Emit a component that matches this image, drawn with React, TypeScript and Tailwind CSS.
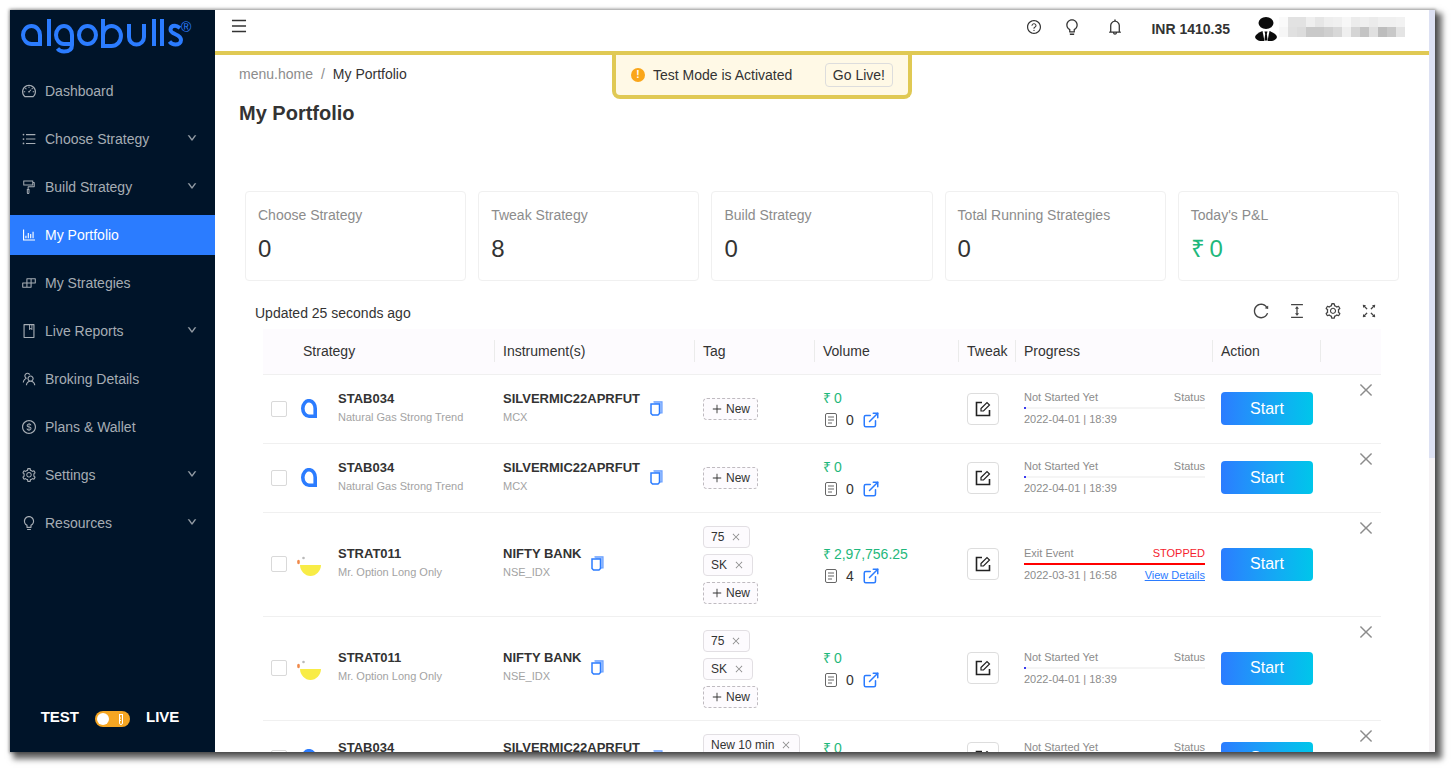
import React from "react";
import {
  AiOutlineDashboard, AiOutlineUnorderedList, AiOutlineFormatPainter, AiOutlineBarChart, AiOutlineBuild,
  AiOutlineBook, AiOutlineTeam, AiOutlineDollar, AiOutlineSetting, AiOutlineBulb, AiOutlineQuestionCircle,
  AiOutlineBell, AiOutlineMenu, AiOutlineReload, AiOutlineColumnHeight, AiOutlineFullscreen, AiOutlineClose,
  AiOutlinePlus, AiOutlineDown,
} from "react-icons/ai";
import { ExternalLink } from "lucide-react";

const nav: [string, React.ComponentType<{ className?: string }>, boolean][] = [
  ["Dashboard", AiOutlineDashboard, false],
  ["Choose Strategy", AiOutlineUnorderedList, true],
  ["Build Strategy", AiOutlineFormatPainter, true],
  ["My Portfolio", AiOutlineBarChart, false],
  ["My Strategies", AiOutlineBuild, false],
  ["Live Reports", AiOutlineBook, true],
  ["Broking Details", AiOutlineTeam, false],
  ["Plans & Wallet", AiOutlineDollar, false],
  ["Settings", AiOutlineSetting, true],
  ["Resources", AiOutlineBulb, true],
];

const blurTop = ["#fafafa", "#e2e2e2", "#e2e2e2", "#efefef", "#e6e6e6", "#eeeeee", "#f0f0f0", "#f7f7f7", "#ececec", "#efefef", "#ebebeb", "#f0f0f0", "#f0f0f0", "#f2f2f2"];
const blurBottom = ["#f6f6f6", "#e0e0e0", "#dcdcdc", "#c9c9c9", "#c9c9c9", "#cfcfcf", "#d8d8d8", "#efefef", "#d5d5d5", "#c4c4c4", "#e0e0e0", "#bdbdbd", "#c8c8c8", "#e4e4e4"];

function Logo() {
  return (
    <svg width="185" height="45" viewBox="0 0 185 45" className="block" fill="none" stroke="#2b7cff" strokeWidth="4">
      <path d="M25 34V23A8.500 9 0 1 0 16.500 32H25" />
      <path d="M34 7V34" />
      <path d="M57 23A8 9 0 1 0 49 32H57" />
      <path d="M57 23V33C57 39 52 39.500 49 39.500C46 39.500 44 38.500 42.500 36.500" />
      <ellipse cx="72.500" cy="23" rx="8.500" ry="9" />
      <path d="M88 7V34H96.500A8.500 9 0 0 0 96.500 14C92 14 88 18 88 23" />
      <path d="M114 12V25A7.500 7.500 0 0 0 129 25V12" />
      <path d="M139 7V34" />
      <path d="M147 7V34" />
      <path d="M165 16C163 14.500 161.500 13.800 160 13.800C157 13.800 155.500 15.500 155.500 17.500C155.500 23 166 21.500 166 28C166 31 163.500 32.500 160.500 32.500C158 32.500 156 31.500 154.500 29.500" />
      <text x="166" y="20" fontSize="14" fill="#2b7cff" stroke="none" fontFamily="Liberation Sans, sans-serif">®</text>
    </svg>
  );
}

function Sidebar() {
  return (
    <aside className="w-[205px] shrink-0 h-full bg-[#001429] flex flex-col">
      <div className="h-[61px] pl-[5px] pt-[2px] shrink-0"><Logo /></div>
      <nav className="flex flex-col gap-2">
        {nav.map(([label, Icon, chev]) => {
          const active = label === "My Portfolio";
          return (
            <div key={label} className={`h-10 flex items-center pl-[11px] pr-[18px] text-[14px] ${active ? "bg-[#2b7cff] text-white" : "text-[#a6adb4]"}`}>
              <Icon className="w-4 h-4 mr-[8px] shrink-0" />
              <span className="flex-1">{label}</span>
              {chev && <AiOutlineDown className="w-[10px] h-[10px] mb-[2px] stroke-[60]" />}
            </div>
          );
        })}
      </nav>
      <div className="mt-auto h-[70px] flex justify-center pt-[26px] pr-[5px] gap-[16px] text-white text-[15px] font-bold leading-[18px]">
        <span>TEST</span>
        <span className="w-[35px] h-4 mt-[3px] rounded-full bg-[#f5a623] flex items-center pl-[2px] gap-[9px]">
          <span className="w-[12px] h-[12px] rounded-full bg-white" />
          <svg width="6" height="11" viewBox="0 0 6 11" fill="none" stroke="#fff" strokeWidth="1"><path d="M1 .5H5M1.500 .5V9A1.500 1.500 0 0 0 4.500 9V.5M1.500 4H3M1.500 6.500H3" /></svg>
        </span>
        <span>LIVE</span>
      </div>
    </aside>
  );
}

function Avatar() {
  return (
    <svg width="22" height="24" viewBox="0 0 22 24" className="block">
      <ellipse cx="11" cy="6" rx="7.500" ry="6" fill="#0b0b0b" />
      <path d="M0 20C.5 17.500 3.500 15.500 7.500 14L9.500 24H5C2.500 23.500 .5 22 0 20Z" fill="#0b0b0b" />
      <path d="M22 20C21.500 17.500 18.500 15.500 14.500 14L12.500 24H17C19.500 23.500 21.500 22 22 20Z" fill="#0b0b0b" />
      <path d="M9.500 14.500H12.500L11.800 17L12.500 22.500L11 24L9.500 22.500L10.200 17Z" fill="#0b0b0b" />
    </svg>
  );
}

function Topbar() {
  return (
    <header className="h-[45px] shrink-0 bg-white border-b-4 border-[#e0c954] flex items-center text-[#333]">
      <AiOutlineMenu className="w-[18px] h-[18px] ml-[15px] mb-[10px]" />
      <div className="ml-auto flex items-center mr-[24px]">
        <AiOutlineQuestionCircle className="w-[16px] h-[16px] mb-[7px]" />
        <AiOutlineBulb className="w-[18px] h-[18px] mb-[7px] ml-[21px]" />
        <AiOutlineBell className="w-[18px] h-[18px] mb-[7px] ml-[25px]" />
        <span className="ml-[27px] text-[14px] font-bold mb-[3px]">INR 1410.35</span>
        <span className="ml-[25px] mb-[3px]"><Avatar /></span>
        <span className="ml-[2px] mb-[7px] flex flex-col w-[126px]">
          {[blurTop, blurBottom].map((row, i) => (
            <span key={i} className="flex h-[10px]">
              {row.map((c, j) => <span key={j} className="flex-1" style={{ backgroundColor: c }} />)}
            </span>
          ))}
        </span>
      </div>
    </header>
  );
}

function Toast() {
  return (
    <div className="absolute left-[397px] top-0 w-[300px] h-[44px] border-4 border-t-0 border-[#e0c954] rounded-b-[8px] bg-[#fff9e6] flex items-center pl-[15px] pr-[15px] text-[14px] text-[#333]">
      <span className="w-[14px] h-[14px] rounded-full bg-[#faa61a] text-white text-[10px] font-bold leading-[14px] text-center">!</span>
      <span className="ml-[8px]">Test Mode is Activated</span>
      <span className="ml-auto h-[24px] px-[7px] border border-[#dddddd] rounded-[4px] leading-[22px]">Go Live!</span>
    </div>
  );
}

function Card({ label, value, green }: { label: string; value: string; green?: boolean }) {
  return (
    <div className="h-[90px] border border-[#f0f0f0] rounded-[4px] px-3 pt-3">
      <div className="text-[14px] leading-[22px] text-[#8c8c8c]">{label}</div>
      <div className={`text-[24px] leading-[32px] mt-[7px] ${green ? "text-[#1fb87c] [word-spacing:-2px]" : "text-[#333]"}`}>{value}</div>
    </div>
  );
}

const cols = "grid grid-cols-[231px_200px_120px_144px_57px_197px_108px_61px]";

function StabLogo() {
  return (
    <svg width="18" height="20" viewBox="0 0 18 20" fill="none" className="block">
      <path d="M15.200 19V10A6.200 7.800 0 1 0 9 17.300H15.200" stroke="#2b7cff" strokeWidth="3.600" />
    </svg>
  );
}

function BowlLogo() {
  return (
    <svg width="24" height="22" viewBox="0 0 24 22" className="block mt-[3px]">
      <path d="M3 10H24C24 16 19 21 13.500 21S3 16 3 10Z" fill="#f8ec46" />
      <ellipse cx="1.500" cy="7" rx="1.400" ry="2.200" fill="#f08a4b" />
      <circle cx="6.500" cy="3" r="1.300" fill="#b9b9b9" />
    </svg>
  );
}

function CopyIcon() {
  return (
    <svg width="13" height="15" viewBox="0 0 13 15" fill="none" className="shrink-0 mb-[2px]">
      <path d="M3.500 .8H12V12H10" fill="#a9c9ff" stroke="#6aa0ff" strokeWidth="1.200" />
      <path d="M1 3H9.500V12.500L8 14H2.500L1 12.500Z" fill="#fff" stroke="#2b7cff" strokeWidth="1.500" />
    </svg>
  );
}

function DocIcon() {
  return (
    <svg width="12" height="14" viewBox="0 0 12 14" fill="none" stroke="#666" strokeWidth="1" className="shrink-0 ml-[2px]">
      <rect x=".5" y=".5" width="11" height="13" rx="1.500" />
      <path d="M3 4H9M3 7H9M3 10H7" />
    </svg>
  );
}

function EditIcon() {
  return (
    <svg width="18" height="18" viewBox="0 0 18 18" fill="none" stroke="#222" strokeWidth="1.600">
      <path d="M8 2.500H2.500V15.500H15.500V10" />
      <path d="M7 8.500L13 2.500L15.500 5L9.500 11H7Z" strokeWidth="1.200" />
    </svg>
  );
}

function Tag({ text }: { text: string }) {
  return (
    <span className="h-[22px] self-start inline-flex items-center pl-[7px] pr-[8px] text-[12px] text-[#333] bg-[#fdfbfe] border border-[#e2dfe3] rounded-[4px]">
      {text}
      <AiOutlineClose className="w-[10px] h-[10px] ml-[7px] text-[#8c8c8c]" />
    </span>
  );
}

function NewTag() {
  return (
    <span className="h-[22px] self-start inline-flex items-center px-[7px] text-[12px] text-[#333] bg-[#fdfbfe] border border-dashed border-[#bfbbc0] rounded-[4px]">
      <AiOutlinePlus className="w-[12px] h-[12px] mr-[3px]" />New
    </span>
  );
}

type Row = {
  logo: "stab" | "bowl"; name: string; sub: string; inst: string; exch: string; tags: string[]; newTag: boolean;
  pl: string; count: string; stopped?: boolean; date: string;
};

const rows: Row[] = [
  { logo: "stab", name: "STAB034", sub: "Natural Gas Strong Trend", inst: "SILVERMIC22APRFUT", exch: "MCX", tags: [], newTag: true, pl: "0", count: "0", date: "2022-04-01 | 18:39" },
  { logo: "stab", name: "STAB034", sub: "Natural Gas Strong Trend", inst: "SILVERMIC22APRFUT", exch: "MCX", tags: [], newTag: true, pl: "0", count: "0", date: "2022-04-01 | 18:39" },
  { logo: "bowl", name: "STRAT011", sub: "Mr. Option Long Only", inst: "NIFTY BANK", exch: "NSE_IDX", tags: ["75", "SK"], newTag: true, pl: "2,97,756.25", count: "4", stopped: true, date: "2022-03-31 | 16:58" },
  { logo: "bowl", name: "STRAT011", sub: "Mr. Option Long Only", inst: "NIFTY BANK", exch: "NSE_IDX", tags: ["75", "SK"], newTag: true, pl: "0", count: "0", date: "2022-04-01 | 18:39" },
  { logo: "stab", name: "STAB034", sub: "Natural Gas Strong Trend", inst: "SILVERMIC22APRFUT", exch: "MCX", tags: ["New 10 min"], newTag: true, pl: "0", count: "0", date: "2022-04-01 | 18:39" },
];

function TableRow({ r }: { r: Row }) {
  return (
    <div className={`${cols} relative items-center min-h-[69px] border-b border-[#f0f0f0]`}>
      <div className="flex items-center pl-[8px]">
        <span className="w-4 h-4 mb-[1px] border border-[#d9d9d9] rounded-[2px] bg-white shrink-0" />
        <span className="w-[24px] flex justify-center shrink-0 ml-[10px]">
          {r.logo === "stab" ? <StabLogo /> : <BowlLogo />}
        </span>
        <div className="ml-[17px] mb-[3px]">
          <div className="text-[13px] leading-[18px] font-bold text-[#333]">{r.name}</div>
          <div className="text-[11px] leading-[18px] text-[#a3a3a3] whitespace-nowrap">{r.sub}</div>
        </div>
      </div>
      <div className="pl-[9px] flex items-center gap-[10px]">
        <div className="mb-[3px]">
          <div className="text-[13px] leading-[18px] font-bold text-[#333]">{r.inst}</div>
          <div className="text-[11px] leading-[18px] text-[#a3a3a3]">{r.exch}</div>
        </div>
        <CopyIcon />
      </div>
      <div className={`pl-[9px] pt-[13px] flex flex-col gap-[6px] ${r.tags.length === 0 ? "pb-[13px]" : "pb-[12px]"}`}>
        {r.tags.map((t) => <Tag key={t} text={t} />)}
        {r.newTag && <NewTag />}
      </div>
      <div className="pl-[9px] text-[14px] leading-[22px]">
        <div className="text-[#1fb87c] [word-spacing:-1px]">₹ {r.pl}</div>
        <div className="flex items-center text-[#333]">
          <DocIcon />
          <span className="ml-[9px]">{r.count}</span>
          <ExternalLink className="w-[18px] h-[18px] ml-[8px] text-[#2b7cff]" strokeWidth={2} />
        </div>
      </div>
      <div className="pl-[9px] mb-[1px]">
        <span className="w-8 h-8 border border-[#dddddd] rounded-[4px] flex items-center justify-center">
          <EditIcon />
        </span>
      </div>
      <div className="pl-[9px] pr-[7px] mb-[2px] text-[11px] leading-[14px] text-[#8c8c8c]">
        <div className="flex justify-between">
          <span>{r.stopped ? "Exit Event" : "Not Started Yet"}</span>
          <span className={r.stopped ? "text-[#f5222d]" : ""}>{r.stopped ? "STOPPED" : "Status"}</span>
        </div>
        <div className="h-[2px] my-[3px] bg-[#f5f5f5]">
          <div className={r.stopped ? "h-full w-full bg-[#ff0000]" : "h-full w-[2px] bg-[#3b3bf0]"} />
        </div>
        <div className="flex justify-between">
          <span>{r.date}</span>
          {r.stopped && <span className="text-[#2b7cff] underline">View Details</span>}
        </div>
      </div>
      <div className="pl-[9px] mb-[1px]">
        <span className="w-[92px] h-[33px] rounded-[4px] bg-gradient-to-r from-[#2b7cff] to-[#00c6ea] text-white text-[16px] flex items-center justify-center">Start</span>
      </div>
      <AiOutlineClose className="absolute right-[6px] top-[6px] w-[18px] h-[18px] text-[#8c8c8c]" />
    </div>
  );
}

function Table() {
  const heads = ["Strategy", "Instrument(s)", "Tag", "Volume", "Tweak", "Progress", "Action", ""];
  return (
    <div className="mx-[48px] mt-[5px]">
      <div className={`${cols} h-[46px] items-center pb-[1px] bg-[#fdfbfe] border-b border-[#f0f0f0] text-[14px] text-[#333]`}>
        {heads.map((h, i) => (
          <div key={i} className={`h-[22px] leading-[22px] ${i === 0 ? "pl-[40px]" : "pl-[8px] border-l border-[#ebebeb]"}`}>{h}</div>
        ))}
      </div>
      {rows.map((r, i) => <TableRow key={i} r={r} />)}
    </div>
  );
}

export default function App() {
  return (
    <div className="w-[1451px] h-[770px] overflow-hidden bg-white pl-[10px] pt-[10px] font-['Liberation_Sans',Arial,sans-serif]">
      <div className="w-[1425px] h-[742px] flex bg-white shadow-[0_0_3px_1px_rgba(0,0,0,0.35),5px_5px_6px_2px_rgba(0,0,0,0.6)]">
        <Sidebar />
        <div className="w-[1214px] shrink-0 h-full flex flex-col overflow-hidden">
          <Topbar />
          <main className="relative flex-1 overflow-hidden">
            <Toast />
            <div className="pl-[24px] pt-[8px] text-[14px] leading-[22px] text-[#8c8c8c]">
              menu.home<span className="mx-[8px]">/</span><span className="text-[#333]">My Portfolio</span>
            </div>
            <h1 className="pl-[24px] mt-[14px] text-[20px] leading-[28px] font-bold text-[#333]">My Portfolio</h1>
            <div className="grid grid-cols-5 gap-[12px] ml-[30px] mr-[30px] mt-[64px]">
              <Card label="Choose Strategy" value="0" />
              <Card label="Tweak Strategy" value="8" />
              <Card label="Build Strategy" value="0" />
              <Card label="Total Running Strategies" value="0" />
              <Card label="Today's P&L" value="₹ 0" green />
            </div>
            <div className="flex items-center ml-[40px] mr-[51px] mt-[21px] h-[22px] text-[14px] text-[#333]">
              <span>Updated 25 seconds ago</span>
              <span className="ml-auto flex items-center gap-[18px] mb-[4px] text-[#444]">
                <AiOutlineReload className="w-[18px] h-[18px]" />
                <AiOutlineColumnHeight className="w-[18px] h-[18px]" />
                <AiOutlineSetting className="w-[18px] h-[18px]" />
                <AiOutlineFullscreen className="w-[18px] h-[18px]" />
              </span>
            </div>
            <Table />
          </main>
        </div>
        <div className="w-[6px] shrink-0 h-full bg-[#f5f2f5]">
          <div className="h-[448px] bg-[#dde1f3]" />
        </div>
      </div>
    </div>
  );
}
